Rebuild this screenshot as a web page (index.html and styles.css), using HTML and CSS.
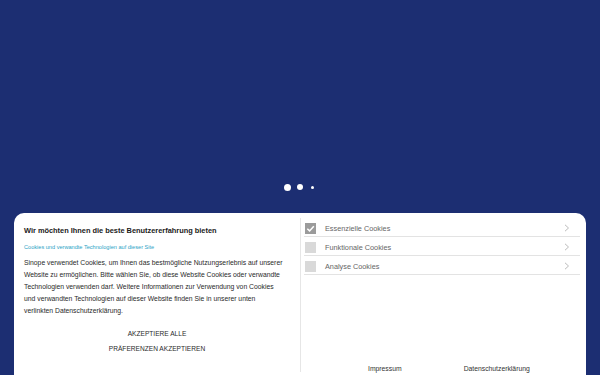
FILE: index.html
```html
<!DOCTYPE html>
<html lang="de">

<head>
    <meta charset="UTF-8">
    <meta name="viewport" content="width=device-width, initial-scale=1.0">
    <title>Sinope</title>
    <link rel="stylesheet" href="styles.css">
</head>

<body>
    <div class="hero">
        <div class="dots">
            <span class="dot dot-big"></span>
            <span class="dot"></span>
            <span class="dot dot-small"></span>
        </div>
    </div>

    <div class="cookie-card">
        <div class="cookie-info">
            <h3 class="cookie-title">Wir möchten Ihnen die beste Benutzererfahrung bieten</h3>
            <p class="cookie-subtitle">Cookies und verwandte Technologien auf dieser Site</p>
            <p class="cookie-text">Sinope verwendet Cookies, um Ihnen das bestmögliche Nutzungserlebnis auf unserer
                Website zu ermöglichen. Bitte wählen Sie, ob diese Website Cookies oder verwandte
                Technologien verwenden darf. Weitere Informationen zur Verwendung von Cookies
                und verwandten Technologien auf dieser Website finden Sie in unserer unten
                verlinkten Datenschutzerklärung.</p>
            <div class="cookie-actions">
                <button class="text-button">AKZEPTIERE ALLE</button>
                <button class="text-button">PRÄFERENZEN AKZEPTIEREN</button>
            </div>
        </div>

        <div class="cookie-prefs">
            <ul class="pref-list">
                <li class="pref-row">
                    <span class="check checked">
                        <svg viewBox="0 0 11 11" width="11" height="11">
                            <polyline points="2.3,5.7 4.6,7.9 8.8,3.2" fill="none" stroke="#fff" stroke-width="1.5" />
                        </svg>
                    </span>
                    <span class="pref-label">Essenzielle Cookies</span>
                    <svg class="chevron" viewBox="0 0 6 8" width="6" height="8">
                        <polyline points="1,0.8 4.5,4 1,7.2" fill="none" stroke="#bbb" stroke-width="1" />
                    </svg>
                </li>
                <li class="pref-row">
                    <span class="check"></span>
                    <span class="pref-label">Funktionale Cookies</span>
                    <svg class="chevron" viewBox="0 0 6 8" width="6" height="8">
                        <polyline points="1,0.8 4.5,4 1,7.2" fill="none" stroke="#bbb" stroke-width="1" />
                    </svg>
                </li>
                <li class="pref-row">
                    <span class="check"></span>
                    <span class="pref-label">Analyse Cookies</span>
                    <svg class="chevron" viewBox="0 0 6 8" width="6" height="8">
                        <polyline points="1,0.8 4.5,4 1,7.2" fill="none" stroke="#bbb" stroke-width="1" />
                    </svg>
                </li>
            </ul>
            <div class="pref-footer">
                <a href="#" class="footer-link">Impressum</a>
                <a href="#" class="footer-link">Datenschutzerklärung</a>
            </div>
        </div>
    </div>
</body>

</html>
```

FILE: styles.css
```css
body {
    margin: 0;
    background-color: #1c2e72;
    font-family: "Liberation Sans", Arial, sans-serif;
    overflow: hidden;
}

.hero {
    height: 213px;
    display: flex;
    align-items: flex-end;
    justify-content: center;
}

.dots {
    display: flex;
    align-items: center;
    gap: 6px;
    height: 8px;
    margin-bottom: 22px;
    margin-right: 3px;
}

.dot {
    width: 6px;
    height: 6px;
    border-radius: 50%;
    background-color: #fff;
}

.dot-big {
    width: 7px;
    height: 7px;
}

.dot-small {
    width: 3px;
    height: 3px;
    margin-left: 2px;
}

.cookie-card {
    margin: 0 14px;
    height: 200px;
    background-color: #fff;
    border-radius: 10px;
    display: grid;
    grid-template-columns: 286px 1fr;
}

.cookie-info {
    padding: 13px 14px 0 10px;
}

.cookie-title {
    margin: 0;
    font-size: 7.4px;
    font-weight: bold;
    color: #1a1a1a;
    line-height: 10px;
}

.cookie-subtitle {
    margin: 7px 0 0;
    font-size: 5.6px;
    color: #2ba3c6;
    line-height: 8px;
}

.cookie-text {
    margin: 6px 0 0;
    font-size: 6.8px;
    color: #2a2a2a;
    line-height: 12px;
}

.cookie-actions {
    display: flex;
    flex-direction: column;
    align-items: center;
    gap: 4px;
    margin-top: 11px;
    margin-right: -4px;
}

.text-button {
    background: none;
    border: none;
    padding: 0;
    font-family: inherit;
    font-size: 6.6px;
    color: #2a2a2a;
    line-height: 11px;
    cursor: pointer;
}

.cookie-prefs {
    margin-top: 5px;
    height: 154px;
    border-left: 1px solid #e6e6e6;
    display: flex;
    flex-direction: column;
    padding-right: 6px;
}

.pref-list {
    list-style: none;
    margin: 0;
    padding: 0 0 0 3px;
}

.pref-row {
    display: flex;
    align-items: flex-end;
    height: 16px;
    padding-bottom: 2px;
    border-bottom: 1px solid #e3e3e3;
}

.check {
    width: 11px;
    height: 11px;
    margin-left: 1px;
    background-color: #d9d9d9;
    display: flex;
}

.check.checked {
    background-color: #9b9b9b;
}

.pref-label {
    flex: 1;
    margin-left: 9px;
    font-size: 7.3px;
    line-height: 11px;
    color: #666;
}

.chevron {
    margin-right: 10px;
    margin-bottom: 2px;
}

.pref-footer {
    margin-top: auto;
    display: flex;
    gap: 62px;
    padding-left: 67px;
}

.footer-link {
    font-size: 6.8px;
    color: #333;
    text-decoration: none;
}
```
